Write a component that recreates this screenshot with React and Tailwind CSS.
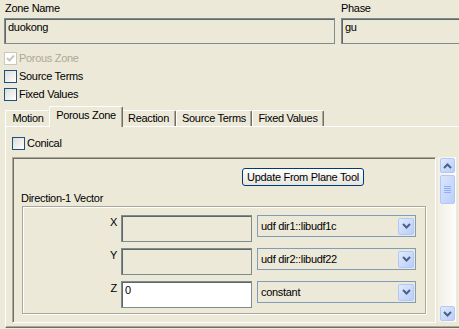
import React from "react";

function Chevron({ up = false }) {
  return (
    <svg width="9" height="6" viewBox="0 0 9 6">
      <path
        d={up ? "M1 5 L4.5 1.5 L8 5" : "M1 1 L4.5 4.5 L8 1"}
        fill="none"
        stroke="#4d6185"
        strokeWidth="2"
      />
    </svg>
  );
}

function Check({ label, checked = false, disabled = false }) {
  return (
    <div className="flex items-center h-[18px] gap-[2px]">
      <span
        className={`w-[13px] h-[13px] border flex items-center justify-center ${
          disabled
            ? "border-[#cac8bb] bg-white"
            : "border-[#1c5180] bg-linear-to-br from-[#dcdcd7] to-white"
        }`}
      >
        {checked && (
          <svg width="9" height="8" viewBox="0 0 9 8">
            <path
              d="M1 4 L3.5 6.5 L8 1.5"
              fill="none"
              stroke={disabled ? "#cac8bb" : "#21a121"}
              strokeWidth="2"
            />
          </svg>
        )}
      </span>
      <span className={disabled ? "text-[#aca899]" : "text-black"}>{label}</span>
    </div>
  );
}

function Field({ value = "", white = false, className = "" }) {
  return (
    <div
      className={`border border-[#7f8c8d] shadow-[inset_1px_1px_0_#5f6868] pl-[3px] pt-[2px] ${
        white ? "bg-white" : "bg-[#ece9d8]"
      } ${className}`}
    >
      {value}
    </div>
  );
}

function Combo({ value }) {
  return (
    <div className="w-[159px] h-[22px] border border-[#7f9db9] bg-[#ece9d8] flex items-center">
      <span className="flex-1 pl-[3px]">{value}</span>
      <span className="w-[16px] h-[17px] mr-[1px] rounded-[2px] border border-[#b4c8f6] bg-linear-to-br from-[#e1eafe] to-[#b8cdf9] flex items-center justify-center">
        <Chevron />
      </span>
    </div>
  );
}

const tabs = [
  { label: "Motion", w: "w-[46px]" },
  { label: "Porous Zone", w: "w-[74px]", active: true },
  { label: "Reaction", w: "w-[55px]" },
  { label: "Source Terms", w: "w-[76px]" },
  { label: "Fixed Values", w: "w-[72px]" },
];

const rows = [
  { axis: "X", value: "", combo: "udf dir1::libudf1c" },
  { axis: "Y", value: "", combo: "udf dir2::libudf22" },
  { axis: "Z", value: "0", white: true, combo: "constant" },
];

export default function App() {
  return (
    <div className="w-[459px] h-[329px] overflow-hidden bg-[#ece9d8] pl-[4px] text-[11px] leading-[13px] tracking-[-0.3px] text-black font-['Liberation_Sans',Arial,sans-serif]">
      {/* Zone name / phase */}
      <div className="flex gap-[6px] pt-[2px]">
        <div className="w-[331px] shrink-0">
          <div className="mb-[3px] pl-[1px]">Zone Name</div>
          <Field value="duokong" className="h-[26px]" />
        </div>
        <div className="w-[140px] shrink-0">
          <div className="mb-[3px]">Phase</div>
          <Field value="gu" className="h-[26px]" />
        </div>
      </div>

      {/* Checkboxes */}
      <div className="mt-[5px]">
        <Check label="Porous Zone" checked disabled />
        <Check label="Source Terms" />
        <Check label="Fixed Values" />
      </div>

      {/* Tabs */}
      <div className="mt-[3px] ml-[1px] flex items-end h-[20px]">
        {tabs.map((t) =>
          t.active ? (
            <div
              key={t.label}
              className={`${t.w} relative z-10 -mx-[2px] -mb-[1px] h-[21px] bg-[#ece9d8] border-t border-l border-r border-t-white border-l-white border-r-[#716f64] shadow-[inset_-1px_0_0_#aca899] rounded-t-[2px] text-center pt-[2px]`}
            >
              {t.label}
            </div>
          ) : (
            <div
              key={t.label}
              className={`${t.w} h-[16px] border-t border-l border-r border-t-white border-l-white border-r-[#716f64] shadow-[inset_-1px_0_0_#aca899] rounded-t-[2px] text-center pt-[1px]`}
            >
              {t.label}
            </div>
          )
        )}
      </div>

      {/* Tab panel */}
      <div className="ml-[1px] w-[460px] h-[202px] border-t border-l border-b border-t-white border-l-white border-b-[#716f64] shadow-[inset_0_-1px_0_#aca899] pl-[6px] pt-[7px]">
        <Check label="Conical" />

        <div className="mt-[5px] flex h-[166px]">
          {/* Viewport */}
          <div className="w-[424px] h-full overflow-hidden border border-t-[#aca899] border-l-[#aca899] border-b-white border-r-white shadow-[inset_1px_1px_0_#716f64]">
            <div className="mt-[10px] flex justify-end pr-[71px]">
              <div className="w-[122px] h-[18px] border border-[#003c74] rounded-[3px] bg-linear-to-b from-white to-[#e6e4dc] flex items-center justify-center">
                Update From Plane Tool
              </div>
            </div>
            <div className="mt-[6px] pl-[8px]">Direction-1 Vector</div>
            <div className="mt-[1px] mx-[9px] border border-[#aca899] shadow-[inset_1px_1px_0_#fff,1px_1px_0_#fff] pt-[8px] pb-[5px] flex flex-col gap-[6px]">
              {rows.map((r) => (
                <div key={r.axis} className="flex items-start">
                  <div className="w-[94px] text-right pt-[1px]">{r.axis}</div>
                  <Field
                    value={r.value}
                    white={r.white}
                    className="ml-[4px] w-[131px] h-[27px]"
                  />
                  <div className="ml-[5px]">
                    <Combo value={r.combo} />
                  </div>
                </div>
              ))}
            </div>
          </div>

          {/* Scrollbar */}
          <div className="ml-[2px] w-[18px] h-[165px] flex flex-col justify-between bg-linear-to-r from-[#f1efe6] to-[#fdfdfb]">
            <div>
              <div className="mt-[1px] ml-[2px] w-[15px] h-[15px] rounded-[2px] border border-[#b4c8f6] bg-linear-to-br from-[#e1eafe] to-[#b8cdf9] flex items-center justify-center">
                <Chevron up />
              </div>
              <div className="mt-[2px] ml-[2px] w-[15px] h-[29px] rounded-[2px] border border-[#b4c8f6] bg-linear-to-br from-[#dbe5fd] to-[#bccff9] flex flex-col items-center justify-center gap-[1px]">
                <span className="w-[7px] h-[1px] bg-[#8cb0f8]" />
                <span className="w-[7px] h-[1px] bg-[#8cb0f8]" />
                <span className="w-[7px] h-[1px] bg-[#8cb0f8]" />
                <span className="w-[7px] h-[1px] bg-[#8cb0f8]" />
              </div>
            </div>
            <div className="mb-[1px] ml-[2px] w-[15px] h-[15px] rounded-[2px] border border-[#b4c8f6] bg-linear-to-br from-[#e1eafe] to-[#b8cdf9] flex items-center justify-center">
              <Chevron />
            </div>
          </div>
        </div>
      </div>
    </div>
  );
}
